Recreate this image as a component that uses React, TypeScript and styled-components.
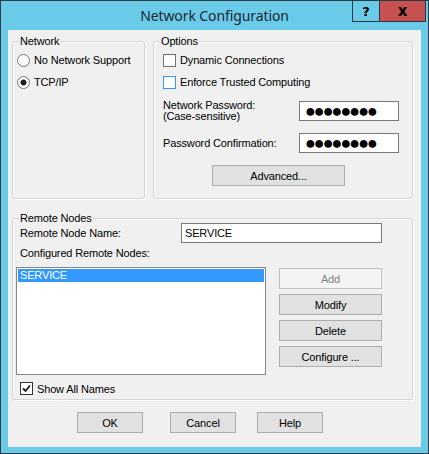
import styled, { createGlobalStyle } from 'styled-components';

const GlobalStyle = createGlobalStyle`
  html, body {
    margin: 0;
    padding: 0;
    background: #ffffff;
  }
`

const Window = styled.div`
  box-sizing: border-box;
  width: 429px;
  height: 454px;
  border: 1px solid #2e3b44;
  background: #6acbe9;
  display: flex;
  flex-direction: column;
  font-family: 'Liberation Sans', Arial, sans-serif;
  font-size: 11px;
  letter-spacing: -0.15px;
  color: #000;
`

const TitleBar = styled.div`
  height: 29px;
  display: grid;
  grid-template-columns: 1fr auto 1fr;
  align-items: center;
`

const Title = styled.div`
  grid-column: 2;
  font-family: 'Noto Sans', 'Open Sans', sans-serif;
  font-size: 14px;
  letter-spacing: -0.1px;
  color: #1b2533;
  white-space: nowrap;
`

const CaptionButtons = styled.div`
  grid-column: 3;
  justify-self: end;
  align-self: start;
  display: flex;
  margin-top: -1px;
  margin-right: 2px;
`

const CaptionButton = styled.div<{ $close?: boolean }>`
  box-sizing: border-box;
  width: ${p => (p.$close ? '46px' : '28px')};
  height: 22px;
  border: 1px solid #2a3a44;
  border-left-width: ${p => (p.$close ? '0' : '1px')};
  background: ${p => (p.$close ? '#c75050' : 'transparent')};
  display: flex;
  align-items: center;
  justify-content: center;
  font-family: 'DejaVu Sans', sans-serif;
  font-weight: 900;
  font-size: ${p => (p.$close ? '15px' : '13px')};
  line-height: 1;
  color: #000;
`

const Client = styled.div`
  box-sizing: border-box;
  height: 417px;
  margin: 0 7px;
  background: #f0f0f0;
  padding: 11px 0 0 4px;
  display: flex;
  flex-direction: column;
`

const TopRow = styled.div`
  display: grid;
  grid-template-columns: 133px 260px;
  column-gap: 8px;
  height: 158px;
`

const Group = styled.div`
  position: relative;
  box-sizing: border-box;
  border: 1px solid #d5d5d5;
  border-radius: 3px;
  box-shadow: inset 1px 1px 0 #ffffff, 1px 1px 0 #ffffff;
`

const NetworkGroup = styled(Group)`
  padding: 7px 0 0 4px;
`

const OptionsGroup = styled(Group)`
  padding: 7px 0 0 9px;
`

const RemoteGroup = styled(Group)`
  width: 401px;
  margin-top: 19px;
  padding: 4px 0 4px 7px;
`

const GroupCaption = styled.span`
  position: absolute;
  top: -7px;
  left: 6px;
  padding: 0 1px;
  background: #f0f0f0;
  line-height: 13px;
`

const OptionRow = styled.div`
  display: flex;
  align-items: center;
  gap: 4px;
  height: 22px;
  white-space: nowrap;
`

const RadioMark = styled.span<{ $checked?: boolean }>`
  box-sizing: border-box;
  flex: none;
  width: 13px;
  height: 13px;
  border-radius: 50%;
  border: 1px solid #7a7a7a;
  background: ${p =>
    p.$checked
      ? 'radial-gradient(circle, #1e1e1e 0 2.6px, #ffffff 3.4px)'
      : '#ffffff'};
`

const CheckBox = styled.span<{ $focus?: boolean; $checked?: boolean }>`
  box-sizing: border-box;
  flex: none;
  width: 13px;
  height: 13px;
  border: 1px solid
    ${p => (p.$focus ? '#3399ff' : p.$checked ? '#333333' : '#707070')};
  background: #ffffff;
  display: flex;
  align-items: center;
  justify-content: center;
`

const PasswordGrid = styled.div`
  display: grid;
  grid-template-columns: 136px 100px;
  grid-auto-rows: 20px;
  row-gap: 12px;
  align-items: center;
  margin-top: 8px;
`

const TwoLineLabel = styled.div`
  line-height: 11px;
`

const TextBox = styled.div<{ $width: number }>`
  box-sizing: border-box;
  width: ${p => p.$width}px;
  height: 20px;
  border: 1px solid #7a7a7a;
  background: #ffffff;
  display: flex;
  align-items: center;
  padding-left: 3px;
  white-space: nowrap;
  overflow: hidden;
`

const Dots = styled.span`
  font-size: 18px;
  line-height: 18px;
  letter-spacing: -2px;
  padding-left: 2px;
`

const PushButton = styled.button<{ $width: number; $disabled?: boolean; $left?: number }>`
  box-sizing: border-box;
  width: ${p => p.$width}px;
  height: 21px;
  margin: 0 0 0 ${p => p.$left ?? 0}px;
  padding: 0;
  border: 1px solid ${p => (p.$disabled ? '#bfbfbf' : '#adadad')};
  border-radius: 0;
  background: ${p => (p.$disabled ? '#f4f4f4' : '#e1e1e1')};
  color: ${p => (p.$disabled ? '#838383' : '#000000')};
  font: inherit;
  letter-spacing: inherit;
  display: flex;
  align-items: center;
  justify-content: center;
`

const AdvancedButton = styled(PushButton)`
  margin-top: 12px;
`

const NameRow = styled.div`
  display: grid;
  grid-template-columns: 161px 201px;
  height: 20px;
  align-items: center;
`

const PlainLabel = styled.div`
  line-height: 13px;
  margin-top: 4px;
`

const ListRow = styled.div`
  display: flex;
  align-items: flex-start;
  gap: 13px;
  margin: 7px 0 0 -4px;
`

const ListBox = styled.div`
  box-sizing: border-box;
  width: 250px;
  height: 108px;
  border: 1px solid #828790;
  background: #ffffff;
  padding: 1px;
`

const ListItem = styled.div<{ $selected?: boolean }>`
  height: 13px;
  line-height: 13px;
  padding-left: 2px;
  background: ${p => (p.$selected ? '#3399ff' : 'transparent')};
  color: ${p => (p.$selected ? '#ffffff' : '#000000')};
`

const ButtonColumn = styled.div`
  display: flex;
  flex-direction: column;
  gap: 5px;
  margin-top: 1px;
`

const ShowAllRow = styled.div`
  display: flex;
  align-items: center;
  gap: 4px;
  height: 13px;
  margin-top: 7px;
`

const DialogButtons = styled.div`
  display: flex;
  margin-top: 12px;
  padding-left: 65px;
`

export default function App() {
  return (
    <>
      <GlobalStyle />
      <Window>
        <TitleBar>
          <Title>Network Configuration</Title>
          <CaptionButtons>
            <CaptionButton>?</CaptionButton>
            <CaptionButton $close>x</CaptionButton>
          </CaptionButtons>
        </TitleBar>

        <Client>
          <TopRow>
            <NetworkGroup>
              <GroupCaption>Network</GroupCaption>
              <OptionRow>
                <RadioMark />
                No Network Support
              </OptionRow>
              <OptionRow>
                <RadioMark $checked />
                TCP/IP
              </OptionRow>
            </NetworkGroup>

            <OptionsGroup>
              <GroupCaption>Options</GroupCaption>
              <OptionRow>
                <CheckBox />
                Dynamic Connections
              </OptionRow>
              <OptionRow>
                <CheckBox $focus />
                Enforce Trusted Computing
              </OptionRow>
              <PasswordGrid>
                <TwoLineLabel>
                  Network Password:
                  <br />
                  (Case-sensitive)
                </TwoLineLabel>
                <TextBox $width={100}>
                  <Dots>●●●●●●●●</Dots>
                </TextBox>
                <div>Password Confirmation:</div>
                <TextBox $width={100}>
                  <Dots>●●●●●●●●</Dots>
                </TextBox>
              </PasswordGrid>
              <AdvancedButton $width={133} $left={49}>Advanced...</AdvancedButton>
            </OptionsGroup>
          </TopRow>

          <RemoteGroup>
            <GroupCaption>Remote Nodes</GroupCaption>
            <NameRow>
              <div>Remote Node Name:</div>
              <TextBox $width={201}>SERVICE</TextBox>
            </NameRow>
            <PlainLabel>Configured Remote Nodes:</PlainLabel>
            <ListRow>
              <ListBox>
                <ListItem $selected>SERVICE</ListItem>
              </ListBox>
              <ButtonColumn>
                <PushButton $width={103} $disabled>Add</PushButton>
                <PushButton $width={103}>Modify</PushButton>
                <PushButton $width={103}>Delete</PushButton>
                <PushButton $width={103}>Configure ...</PushButton>
              </ButtonColumn>
            </ListRow>
            <ShowAllRow>
              <CheckBox $checked>
                <svg width="9" height="9" viewBox="0 0 9 9">
                  <path d="M1 4.5 L3.5 7 L8 1.5" fill="none" stroke="#1a1a1a" strokeWidth="1.8" />
                </svg>
              </CheckBox>
              Show All Names
            </ShowAllRow>
          </RemoteGroup>

          <DialogButtons>
            <PushButton $width={66}>OK</PushButton>
            <PushButton $width={66} $left={27}>Cancel</PushButton>
            <PushButton $width={66} $left={21}>Help</PushButton>
          </DialogButtons>
        </Client>
      </Window>
    </>
  )
}
